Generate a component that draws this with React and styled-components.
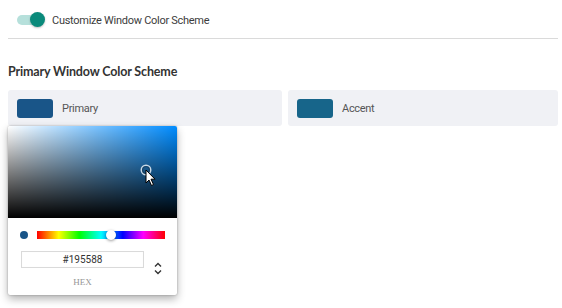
import React from "react"
import styled, { createGlobalStyle } from "styled-components";

const GlobalStyle = createGlobalStyle`
    body {
        margin: 0;
        min-height: 308px;
        background: #ffffff;
        font-family: Roboto, "Liberation Sans", sans-serif;
    }
`;

const Page = styled.div`
    padding: 0 4px 0 8px;
`;

const Header = styled.div`
    height: 36px;
    padding: 2px 0 0 9px;
    display: flex;
    align-items: center;
    gap: 11px;
    border-bottom: 1px solid #dadada;
`;

const Track = styled.div`
    position: relative;
    width: 24px;
    height: 10px;
    border-radius: 5px;
    background: #b6e0db;
`;

const Knob = styled.div`
    position: absolute;
    left: 13px;
    top: -3px;
    width: 15px;
    height: 15px;
    border-radius: 50%;
    background: #0a8a7b;
    box-shadow: 0 1px 2px rgba(0, 0, 0, 0.25);
`;

const HeaderLabel = styled.span`
    font-size: 11px;
    letter-spacing: -0.28px;
    color: #3c3c3c;
`;

const Heading = styled.h2`
    margin: 25px 0 10px;
    font-family: Lato, "Liberation Sans", sans-serif;
    font-size: 12.5px;
    letter-spacing: -0.15px;
    line-height: 16px;
    font-weight: 700;
    color: #333333;
`;

const Cards = styled.div`
    display: grid;
    grid-template-columns: 274px 270px;
    align-items: start;
    gap: 6px;
`;

const Column = styled.div`
    display: flex;
    flex-direction: column;
    align-items: flex-start;
`;

const Card = styled.div`
    align-self: stretch;
    height: 36px;
    padding: 0 9px;
    border-radius: 3px;
    background: #f0f1f5;
    display: flex;
    align-items: center;
    gap: 9px;
`;

const Swatch = styled.div`
    width: 36px;
    height: 19px;
    border-radius: 3px;
    background: ${p => p.color};
`;

const CardLabel = styled.span`
    font-size: 11px;
    letter-spacing: -0.3px;
    color: #555555;
`;

const Picker = styled.div`
    width: 169px;
    background: #ffffff;
    border-radius: 2px;
    box-shadow: 0 0 2px rgba(0, 0, 0, 0.3), 0 4px 8px rgba(0, 0, 0, 0.3);
`;

const Saturation = styled.div`
    position: relative;
    height: 92px;
    border-radius: 2px 2px 0 0;
    background:
        linear-gradient(to top, #000000, rgba(0, 0, 0, 0)),
        linear-gradient(to right, #ffffff, rgba(255, 255, 255, 0)),
        hsl(207, 100%, 50%);
`;

const SatPointer = styled.div`
    position: absolute;
    left: 134px;
    top: 40px;
    width: 8px;
    height: 8px;
    border-radius: 50%;
    box-shadow: 0 0 0 1.5px #c8d8e6, inset 0 0 1px 1px rgba(0, 0, 0, 0.3);
`;

const Cursor = styled.svg`
    position: absolute;
    left: 137px;
    top: 43px;
`;

const Body = styled.div`
    padding: 12px 12px 7px 12px;
`;

const HueRow = styled.div`
    height: 10px;
    display: flex;
    align-items: center;
`;

const Dot = styled.div`
    width: 8px;
    height: 8px;
    border-radius: 50%;
    background: ${p => p.color};
`;

const Hue = styled.div`
    position: relative;
    flex: 1;
    height: 8px;
    margin-left: 9px;
    background: linear-gradient(to right, #f00 0%, #ff0 17%, #0f0 33%, #0ff 50%, #00f 67%, #f0f 83%, #f00 100%);
`;

const HueThumb = styled.div`
    position: absolute;
    top: -1px;
    width: 10px;
    height: 10px;
    margin-left: -5px;
    border-radius: 50%;
    background: #ffffff;
    box-shadow: 0 1px 3px rgba(0, 0, 0, 0.4);
`;

const Fields = styled.div`
    margin-top: 11px;
    display: flex;
    align-items: flex-start;
`;

const FieldCol = styled.div`
    width: 123px;
    margin-left: 1px;
    display: flex;
    flex-direction: column;
    align-items: center;
`;

const HexInput = styled.div`
    box-sizing: border-box;
    width: 100%;
    height: 17px;
    border: 1px solid #dadada;
    box-shadow: inset 0 0 1px rgba(0, 0, 0, 0.05);
    font-size: 10px;
    line-height: 15px;
    text-align: center;
    color: #333333;
`;

const FieldLabel = styled.div`
    margin-top: 8px;
    font-family: "Liberation Serif", serif;
    font-size: 9px;
    line-height: 12px;
    color: #969696;
`;

const Toggler = styled.svg`
    margin: 11px 0 0 10px;
`;

export default function App() {
    const hue = 207
    const huePos = (hue / 360) * 100

    return (
        <Page>
            <GlobalStyle />
            <Header>
                <Track>
                    <Knob />
                </Track>
                <HeaderLabel>Customize Window Color Scheme</HeaderLabel>
            </Header>
            <Heading>Primary Window Color Scheme</Heading>
            <Cards>
                <Column>
                    <Card>
                        <Swatch color="#195588" />
                        <CardLabel>Primary</CardLabel>
                    </Card>
                    <Picker>
                        <Saturation>
                            <SatPointer />
                            <Cursor width="12" height="18" viewBox="0 0 12 18">
                                <path d="M1 1 L1 14 L4 11 L6.5 16.5 L8.5 15.5 L6 10.2 L10 10.2 Z" fill="#ffffff" stroke="#000000" strokeWidth="1" strokeLinejoin="round" />
                            </Cursor>
                        </Saturation>
                        <Body>
                            <HueRow>
                                <Dot color="#195588" />
                                <Hue>
                                    <HueThumb style={{ left: `${huePos}%` }} />
                                </Hue>
                            </HueRow>
                            <Fields>
                                <FieldCol>
                                    <HexInput>#195588</HexInput>
                                    <FieldLabel>HEX</FieldLabel>
                                </FieldCol>
                                <Toggler width="8" height="13" viewBox="0 0 8 13">
                                    <path d="M1 4.5 L4 1.5 L7 4.5" fill="none" stroke="#333" strokeWidth="1.4" />
                                    <path d="M1 8.5 L4 11.5 L7 8.5" fill="none" stroke="#333" strokeWidth="1.4" />
                                </Toggler>
                            </Fields>
                        </Body>
                    </Picker>
                </Column>
                <Card>
                    <Swatch color="#17658a" />
                    <CardLabel>Accent</CardLabel>
                </Card>
            </Cards>
        </Page>
    )
}
